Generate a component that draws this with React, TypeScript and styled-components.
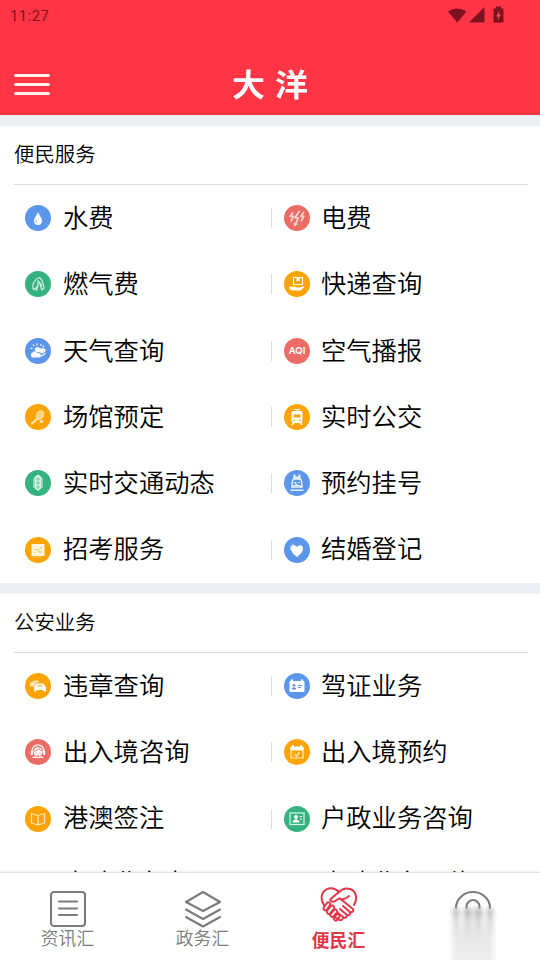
import React from 'react';
import styled, { createGlobalStyle } from 'styled-components';

const Global = createGlobalStyle`
  * { box-sizing: border-box; }
  body { margin: 0; background: #fff; font-family: "Noto Sans CJK SC", "Noto Sans", sans-serif; }
`;

const Screen = styled.div`
  width: 540px;
  height: 960px;
  overflow: hidden;
  display: flex;
  flex-direction: column;
  background: #eceff3;
`;

const Header = styled.header`
  flex: none;
  height: 115px;
  background: #ff3545;
  display: flex;
  flex-direction: column;
`;

const StatusBar = styled.div`
  height: 30px;
  padding: 1px 35px 0 10px;
  display: flex;
  align-items: center;
  justify-content: space-between;
  color: #7d1220;
  font: 400 14.8px/30px Roboto, sans-serif;
  letter-spacing: 0.5px;
`;

const StatusIcons = styled.svg`
  width: 58px;
  height: 20px;
  margin-top: -1px;
`;

const TitleBar = styled.div`
  flex: 1;
  display: grid;
  grid-template-columns: 50px 1fr 50px;
  align-items: center;
  padding: 25px 14px 0;
`;

const MenuButton = styled.button`
  all: unset;
  width: 36px;
  height: 21px;
  margin-top: -1px;
  display: flex;
  flex-direction: column;
  justify-content: space-between;
`;

const MenuLine = styled.span`
  height: 3.4px;
  border-radius: 2px;
  background: #ffeef0;
`;

const Title = styled.h1`
  margin: -4px 0 0;
  text-align: center;
  color: #fff;
  font-size: 33px;
  font-weight: 700;
  line-height: 50px;
  letter-spacing: 10px;
  text-indent: 10px;
  transform: scaleY(0.92);
`;

const Content = styled.main`
  flex: 1;
  min-height: 0;
  overflow: hidden;
  display: flex;
  flex-direction: column;
  gap: 11px;
  padding-top: 11px;
`;

const Section = styled.section`
  flex: none;
  background: #fff;
`;

const SectionTitle = styled.h2`
  margin: 0 12px 0 14px;
  height: 59px;
  border-bottom: 1px solid #d9d9d9;
  font-size: 20.4px;
  font-weight: 350;
  line-height: 54px;
  color: #000;
`;

const Grid = styled.div`
  display: grid;
  grid-template-columns: 271px 1fr;
  grid-auto-rows: 66.3px;
`;

const Service = styled.div<{ $right: boolean }>`
  display: flex;
  align-items: center;
  padding-left: ${(p) => (p.$right ? 0 : 25)}px;
  &::before {
    content: "";
    display: ${(p) => (p.$right ? 'block' : 'none')};
    width: 1px;
    height: 20px;
    margin-right: 12px;
    background: #dcdcdc;
  }
`;

const Badge = styled.svg<{ $color: string }>`
  flex: none;
  width: 26px;
  height: 26px;
  border-radius: 50%;
  background: ${(p) => p.$color};
`;

const ServiceName = styled.span<{ $right: boolean; $raised: boolean }>`
  margin-left: ${(p) => (p.$right ? 11 : 12)}px;
  padding-bottom: ${(p) => (p.$raised ? 7 : 4.4)}px;
  font-size: 25.3px;
  font-weight: 350;
  line-height: 36px;
  white-space: nowrap;
  color: #000;
`;

const TabBar = styled.nav`
  flex: none;
  position: relative;
  height: 88px;
  background: #fff;
  border-top: 1px solid #e3e3e3;
  box-shadow: 0 -1px 2px rgba(0, 0, 0, 0.06);
  display: grid;
  grid-template-columns: repeat(4, 1fr);
`;

const Tab = styled.a<{ $active?: boolean }>`
  display: flex;
  flex-direction: column;
  align-items: center;
  padding-top: ${(p) => (p.$active ? 13 : 17)}px;
  color: ${(p) => (p.$active ? '#e03848' : '#7c7c7c')};
  font-size: 17.8px;
  font-weight: ${(p) => (p.$active ? 700 : 350)};
  line-height: 24px;
`;

const TabIcon = styled.svg<{ $active?: boolean }>`
  flex: none;
  width: 38px;
  height: 38px;
  margin-bottom: ${(p) => (p.$active ? 3 : -3)}px;
  margin-left: ${(p) => (p.$active ? 2 : 0)}px;
  fill: none;
  stroke: currentColor;
  stroke-width: ${(p) => (p.$active ? 2 : 2.1)};
  stroke-linecap: round;
  stroke-linejoin: round;
`;

const TabLabel = styled.span<{ $active?: boolean }>`
  margin-left: ${(p) => (p.$active ? 2 : 0)}px;
`;

const Smear = styled.div`
  flex: none;
  width: 50px;
  height: 62px;
  margin-top: -20px;
  background:
    linear-gradient(rgba(255,255,255,0), rgba(238,238,238,0.7) 16px, #e8e8e8 34px, #efefef),
    linear-gradient(90deg, #eee 0, #9c9c9c 7px, #e6e6e6 12px, #eaeaea 15px, #9c9c9c 19px, #d8d8d8 25px, #9c9c9c 31px, #eaeaea 35px, #e6e6e6 38px, #9c9c9c 43px, #eee 50px);
  mask-image: linear-gradient(90deg, transparent, #000 9px, #000 41px, transparent), linear-gradient(transparent, #000 7px);
  mask-composite: intersect;
  filter: blur(1px);
`;

const BLUE = '#5b96ea';
const RED = '#ec6d66';
const GREEN = '#34b37e';
const ORANGE = '#fda304';

const glyphs: Record<string, React.ReactNode> = {
  drop: <><path d="M13 7C12 10 9 13 9 16a4 4 0 0 0 8 0C17 13 14 10 13 7Z" fill="#fff" /><path d="M11 14.5c-.6 2 .4 3 1.5 3.3" stroke={BLUE} strokeWidth=".8" fill="none" /></>,
  bolts: <g stroke="#fbdcda" fill="none" strokeWidth="1.6"><path d="M9 7.500 6.500 11l2.700.3L7 16.500M15.500 6 11 12.500l3.300.4L11 20.500M19.800 7l-2.800 4 2.600.3-2.600 5" /><path d="m10 17.500.8 3.500 2.800-2" strokeWidth="1" /></g>,
  leaf: <g stroke="#ccefdf" fill="none" strokeWidth="1.2" strokeLinecap="round"><path d="M9 18.500c-2-1-1.500-5 .5-8 1.500-2.500 3-3.500 5-4 2.500 2 4 6 4.500 10.500l-2 2c-1.500-3-1.500-6-3-8.500" /><path d="M9 18.500c3-1.500 4.500-5 4-9M13 14l-1.500 5.500M15.500 12l1.500 3" /></g>,
  parcel: <><path d="M9.500 6.500h9v7h-9Z" fill="none" stroke="#fff" strokeWidth="1.2" /><path d="M12.500 6.500h3v3.500h-3Z" fill="#fff" /><path d="M5.500 15.500h5l2 1h3l4-1.500 1 1-4 3.500H9l-3.500-1Z" fill="#fff" /></>,
  weather: <g fill="#f5f9ff"><circle cx="12.500" cy="11.500" r="2.600" /><path d="M7.500 19.500a2.700 2.700 0 0 1 0-5 3.300 3.300 0 0 1 5.500.8 2.200 2.200 0 0 1 1.500 4.200ZM13 13.500a3 3 0 0 1 4.500-3 2.300 2.300 0 0 1 2.500 3.700l-3.500 1.200Z" /><path d="M12 5.500v2M8 6.500l1.200 1.700M5.500 10l2 .8M16.500 6l-1.200 1.800M19 8l-1.500 1.200M15.500 18.500l5-3" stroke="#fff" strokeWidth="1.100" /></g>,
  aqi: <text x="13" y="16.400" textAnchor="middle" fill="#fff" fontFamily="Inter, sans-serif" fontSize="9.600" fontWeight="600">AQI</text>,
  racket: <><ellipse cx="15" cy="11" rx="3.3" ry="4.5" transform="rotate(35 15 11)" fill="#ffd27c" stroke="#ffe6b4" /><path d="m12 15-5 4.5" stroke="#ffe6b4" strokeWidth="2" strokeLinecap="round" /><circle cx="16.5" cy="17.5" r="1.7" fill="#ffe3ad" /></>,
  bus: <><path d="M10 5.500h6M13 4.700V7" stroke="#fff" strokeWidth="1.1" /><rect x="7.500" y="7" width="11" height="12" rx="2" fill="#fff" /><path d="M9.500 10.500h7v3h-7Z" fill={ORANGE} /><circle cx="10" cy="16.300" r=".9" fill={ORANGE} /><circle cx="16" cy="16.300" r=".9" fill={ORANGE} /><path d="m10 18.500-2 2.500M16 18.500l2 2.500" stroke="#fff" strokeWidth="1.4" /></>,
  traffic: <><path d="m13 4.500 3.500 2.500v11L13 21l-3.500-3V7Z" fill="#d7f3e6" /><path d="M8.700 8v10M17.300 8v10" stroke="#d7f3e6" strokeWidth=".7" /><g fill="none" stroke={GREEN} strokeWidth=".6"><circle cx="13" cy="9" r="1.200" /><circle cx="13" cy="13" r="1.200" /><circle cx="13" cy="17" r="1.200" /></g></>,
  clinic: <><path d="M9.500 4.500h2v2h3v-2h2V9h-7Z" fill="#e6f0ff" /><path d="M9.500 9C8.500 10 8 12 8 17h10c0-5-.5-7-1.500-8Z" fill="none" stroke="#e6f0ff" strokeWidth="1.5" /><path d="M10 12.500h2M13.500 12.500h2.500M13 15l-2-2" stroke="#e6f0ff" strokeWidth="1.2" /><path d="M8 17.500c2-3 8-3 10 0M6.500 20.300h13" fill="none" stroke="#e6f0ff" strokeWidth="1.4" /></>,
  exam: <><rect x="6.500" y="7" width="13" height="12" fill="#fff5df" /><path d="m9.500 12 2 1.200 3-1M15 11h2M13 15h4M9.500 15l1 1" stroke="#f7b94e" fill="none" strokeWidth="1" /><path d="M6.500 20h11" stroke="#fbc665" strokeWidth=".8" /></>,
  heart: <><path d="M13 20c-3-2.500-6-5-6-8.500C7 8 11 7 13 10c2-3 6-2 6 1.500 0 3.500-3 6-6 8.500Z" fill="#fff" /><path d="M7 13c-1-3 1-5.500 3-5" stroke="#cfe1fc" fill="none" strokeWidth="1.200" /></>,
  cars: <><path d="M5 13.500c-.5-3 .3-4.500 2.500-4.500l1-1.500h4.500l1.500 2h-3.500l-2 4Z" fill="#ffe6b7" /><path d="m9.500 13 1.800-2.500h7l1.700 2.500 1 1v4.500h-2.500V17h-7v1.500H9V14Z" fill="#fff" /><path d="M12 13.500h6l-1-1.800h-4.300Z" fill="#fcc563" /></>,
  agent: <><path d="M7 15V12a6 6 0 0 1 12 0v3" stroke="#ffe4e1" fill="none" strokeWidth="1.700" /><circle cx="13" cy="12.800" r="4.500" fill="#fff" /><path d="M9 12c2 0 4-1 5-2.500 0 1 1.500 2 3 2M10.500 14h1M14.500 14h1M12 16.300h2" stroke={RED} fill="none" strokeWidth=".9" /><path d="M7 19c1-2 3-2.500 6-1 3-1.500 5-1 6 1Z" fill="#ffe9e7" /><path d="M5.800 12h2v4h-2ZM18.200 12h2v4h-2Z" fill="#fff" /></>,
  book: <g fill="none" stroke="#ffe6b4" strokeWidth="1.3" strokeLinejoin="round"><path d="m6.500 7.500 6.500 2v9.500l-6.500-2ZM19.500 7.500l-6.500 2v9.500l6.500-2Z" /></g>,
  license: <><rect x="5.500" y="8" width="15" height="11" rx="1" fill="#fff" /><path d="M8 6.500v2.500M18 6.500v2.500" stroke="#fff" strokeWidth="2.200" /><circle cx="10" cy="12.300" r="1.400" fill={BLUE} /><path d="M7.700 16.500c0-3 4.600-3 4.600 0ZM14 12h4v1h-4ZM14 14h3v1h-3Z" fill={BLUE} /></>,
  calendar: <><path d="M7 9h12v10H7Z" fill="none" stroke="#fff1d2" strokeWidth="1.200" /><path d="M6.500 7.500h13V11.500h-13Z" fill="#fff" /><path d="M9 6v3M17 6v3" stroke="#fff" strokeWidth="1.800" /><path d="m11 15.500 1.500 1.500 3-3.500" stroke="#fff1d2" fill="none" strokeWidth="1.200" /></>,
  residence: <><rect x="6" y="7" width="14" height="11.500" fill="none" stroke="#d9f5e7" strokeWidth="1.200" /><circle cx="12" cy="11" r="2" fill="#fff" /><path d="M8.500 16.500c0-2 1.500-2.500 2.500-3h2c1 .5 2.500 1 2.500 3ZM15.500 10h2.500v1h-2.500ZM16 12.500h2v1h-2Z" fill="#fff" /></>,
};

type Item = { name: string; color?: string; icon?: string };
const publicServices: Item[] = [
  { name: '水费', color: BLUE, icon: 'drop' },
  { name: '电费', color: RED, icon: 'bolts' },
  { name: '燃气费', color: GREEN, icon: 'leaf' },
  { name: '快递查询', color: ORANGE, icon: 'parcel' },
  { name: '天气查询', color: BLUE, icon: 'weather' },
  { name: '空气播报', color: RED, icon: 'aqi' },
  { name: '场馆预定', color: ORANGE, icon: 'racket' },
  { name: '实时公交', color: ORANGE, icon: 'bus' },
  { name: '实时交通动态', color: GREEN, icon: 'traffic' },
  { name: '预约挂号', color: BLUE, icon: 'clinic' },
  { name: '招考服务', color: ORANGE, icon: 'exam' },
  { name: '结婚登记', color: BLUE, icon: 'heart' },
];
const policeServices: Item[] = [
  { name: '违章查询', color: ORANGE, icon: 'cars' },
  { name: '驾证业务', color: BLUE, icon: 'license' },
  { name: '出入境咨询', color: RED, icon: 'agent' },
  { name: '出入境预约', color: ORANGE, icon: 'calendar' },
  { name: '港澳签注', color: ORANGE, icon: 'book' },
  { name: '户政业务咨询', color: GREEN, icon: 'residence' },
  { name: '户政业务办理' },
  { name: '户政业务预约' },
];

function ServiceSection({ title, items }: { title: string; items: Item[] }) {
  return (
    <Section>
      <SectionTitle>{title}</SectionTitle>
      <Grid>
        {items.map((it, i) => (
          <Service key={it.name} $right={i % 2 === 1}>
            <Badge $color={it.color ?? 'transparent'} viewBox="0 0 26 26">{it.icon && glyphs[it.icon]}</Badge>
            <ServiceName $right={i % 2 === 1} $raised={!it.icon}>{it.name}</ServiceName>
          </Service>
        ))}
      </Grid>
    </Section>
  );
}

export default function App() {
  return (
    <>
      <Global />
      <Screen>
        <Header>
          <StatusBar>
            <span>11:27</span>
            <StatusIcons viewBox="0 0 58 20" fill="#7d1220">
              <path d="M1 6.500Q10 .5 19.500 6.500L10.300 17.500Z" />
              <path d="M37.500 2v15.500H22Z" />
              <path d="M49 1.500h5v2h2.500v14h-10v-14H49Z" />
              <path d="m52.500 5.500-3.500 6h2.300l-.8 4 3.500-6h-2.300Z" fill="#e8505c" />
            </StatusIcons>
          </StatusBar>
          <TitleBar>
            <MenuButton aria-label="菜单"><MenuLine /><MenuLine /><MenuLine /></MenuButton>
            <Title>大洋</Title>
          </TitleBar>
        </Header>
        <Content>
          <ServiceSection title="便民服务" items={publicServices} />
          <ServiceSection title="公安业务" items={policeServices} />
        </Content>
        <TabBar>
          <Tab>
            <TabIcon viewBox="0 0 38 38"><rect x="2" y="2" width="34" height="34" rx="3" /><path d="M10 11.500h18M10 18.500h18M10 25h18" /></TabIcon>
            <TabLabel>资讯汇</TabLabel>
          </Tab>
          <Tab>
            <TabIcon viewBox="0 0 38 38"><path d="M19 2 36 12 19 21 2 12ZM2 19.500l17 9.500 17-9.500M2 27l17 9.500L36 27" /></TabIcon>
            <TabLabel>政务汇</TabLabel>
          </Tab>
          <Tab $active>
            <TabIcon $active viewBox="0 0 38 38">
              <path d="M4.500 20C-1 12 2 4 9 2.500c4-.8 7 .5 10 3.500 3-3 7-4.300 11-3 6 2 8 9 4 16" />
              <path d="M19 6 10 13.500c1 3 4 2.500 6 1l3-2c3 1.500 5 1 8-1M27 11.500l2-1.500M20 12.500l13 10.500c1 2-1 4-3 3l-7-6" />
              <path d="M30 26c1 2-1 4-3 3l-7-6M27 29c0 2.500-2 3.500-4 2l-5-4M23 31c0 3-2 4-4.500 2.500L15 31" />
              <path d="m4 21 3-4c1.500-1.500 4 0 3 2l-3 4.500c-1.500 2-4.500 0-3-2.500ZM7 24.500l4-4.500c1.500-1.500 4 .5 3 2.500l-4 5c-2 1.500-4-1-3-3ZM10.500 28l3.500-4c1.500-1.500 4 .5 3 2.500l-3.500 4c-1.500 1.500-4-.5-3-2.500ZM14 31.500l2.500-3c1.500-1.500 4 .5 3 2.500L17 34c-1.500 1.500-4-.5-3-2.500Z" />
            </TabIcon>
            <TabLabel $active>便民汇</TabLabel>
          </Tab>
          <Tab>
            <TabIcon viewBox="0 0 38 38"><path d="M2 18a17 16 0 0 1 34 0M12.500 18v-1.500a6.500 6.500 0 0 1 13 0v1.500" /></TabIcon>
            <Smear />
          </Tab>
        </TabBar>
      </Screen>
    </>
  );
}
